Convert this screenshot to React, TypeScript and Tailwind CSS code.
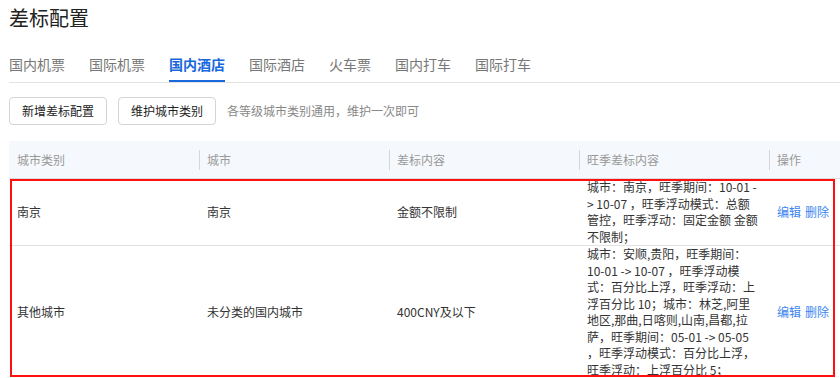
const tabs = ['国内机票', '国际机票', '国内酒店', '国际酒店', '火车票', '国内打车', '国际打车'];

const heads = ['城市类别', '城市', '差标内容', '旺季差标内容', '操作'];

const rows = [
  {
    type: '南京',
    city: '南京',
    limit: '金额不限制',
    peak: [
      '城市：南京，旺季期间：10-01 -',
      '> 10-07 ，旺季浮动模式：总额',
      '管控，旺季浮动：固定金额 金额',
      '不限制；',
    ],
  },
  {
    type: '其他城市',
    city: '未分类的国内城市',
    limit: '400CNY及以下',
    peak: [
      '城市：安顺,贵阳，旺季期间：',
      '10-01 -> 10-07 ，旺季浮动模',
      '式：百分比上浮，旺季浮动：上',
      '浮百分比 10；城市：林芝,阿里',
      '地区,那曲,日喀则,山南,昌都,拉',
      '萨，旺季期间：05-01 -> 05-05',
      '，旺季浮动模式：百分比上浮，',
      '旺季浮动：上浮百分比 5；',
    ],
  },
];

const App = () => {
  return (
    <div className="w-[840px] h-[378px] overflow-hidden bg-white pl-[9px] font-['Noto_Sans_CJK_SC','Noto_Sans',sans-serif] text-[#333]">
      {/* Title */}
      <div className="h-[36px] flex items-center text-[20px] text-[#222]">差标配置</div>

      {/* Tabs */}
      <div className="mt-[18px] flex gap-6 border-b border-[#e3e3e3] h-[29px]">
        {tabs.map((t, i) => (
          <div
            key={t}
            className={
              i === 2
                ? 'h-[28px] text-[14px] leading-[20px] font-bold text-[#1668dc] border-b-2 border-[#1668dc]'
                : 'h-[28px] text-[14px] leading-[20px] text-[#777]'
            }
          >
            {t}
          </div>
        ))}
      </div>

      {/* Actions */}
      <div className="mt-[14px] flex items-center gap-[11px]">
        <button className="h-[28px] px-[12px] rounded-[4px] border border-[#d4d4d4] bg-white text-[12px] text-[#222]">
          新增差标配置
        </button>
        <button className="h-[28px] px-[12px] rounded-[4px] border border-[#d4d4d4] bg-white text-[12px] text-[#222]">
          维护城市类别
        </button>
        <span className="text-[12px] text-[#888]">各等级城市类别通用，维护一次即可</span>
      </div>

      {/* Table */}
      <div className="relative mt-[16px] w-[950px]">
        <div className="grid grid-cols-[190px_190px_190px_190px_190px] h-[38px] bg-[#f5f8fc] border-b border-[#dcdcdc] items-center">
          {heads.map((h, i) => (
            <div key={h} className="flex items-center h-full">
              {i > 0 && <div className="w-px h-[20px] bg-[#d6d6d6]" />}
              <span className={i > 0 ? 'pl-[7px] text-[12px] text-[#999]' : 'pl-[8px] text-[12px] text-[#999]'}>{h}</span>
            </div>
          ))}
        </div>

        {rows.map((r) => (
          <div key={r.type} className="grid grid-cols-[190px_190px_190px_190px_190px] border-b border-[#e2e2e2] text-[12px]">
            <div className="px-[8px] flex items-center">{r.type}</div>
            <div className="px-[8px] flex items-center">{r.city}</div>
            <div className="px-[8px] flex items-center">{r.limit}</div>
            <div className="px-[8px] flex flex-col justify-center leading-[16.5px]">
              {r.peak.map((l, j) => (
                <div key={j} className="whitespace-nowrap">{l}</div>
              ))}
            </div>
            <div className="px-[8px] flex items-center gap-[4px] text-[#3b86f0]">
              <span>编辑</span>
              <span>删除</span>
            </div>
          </div>
        ))}

        {/* highlight frame over the rows */}
        <div className="absolute left-[1px] top-[38px] w-[825px] h-[198px] border-2 border-[#ff1010] pointer-events-none" />
      </div>
    </div>
  );
};

export default App;
